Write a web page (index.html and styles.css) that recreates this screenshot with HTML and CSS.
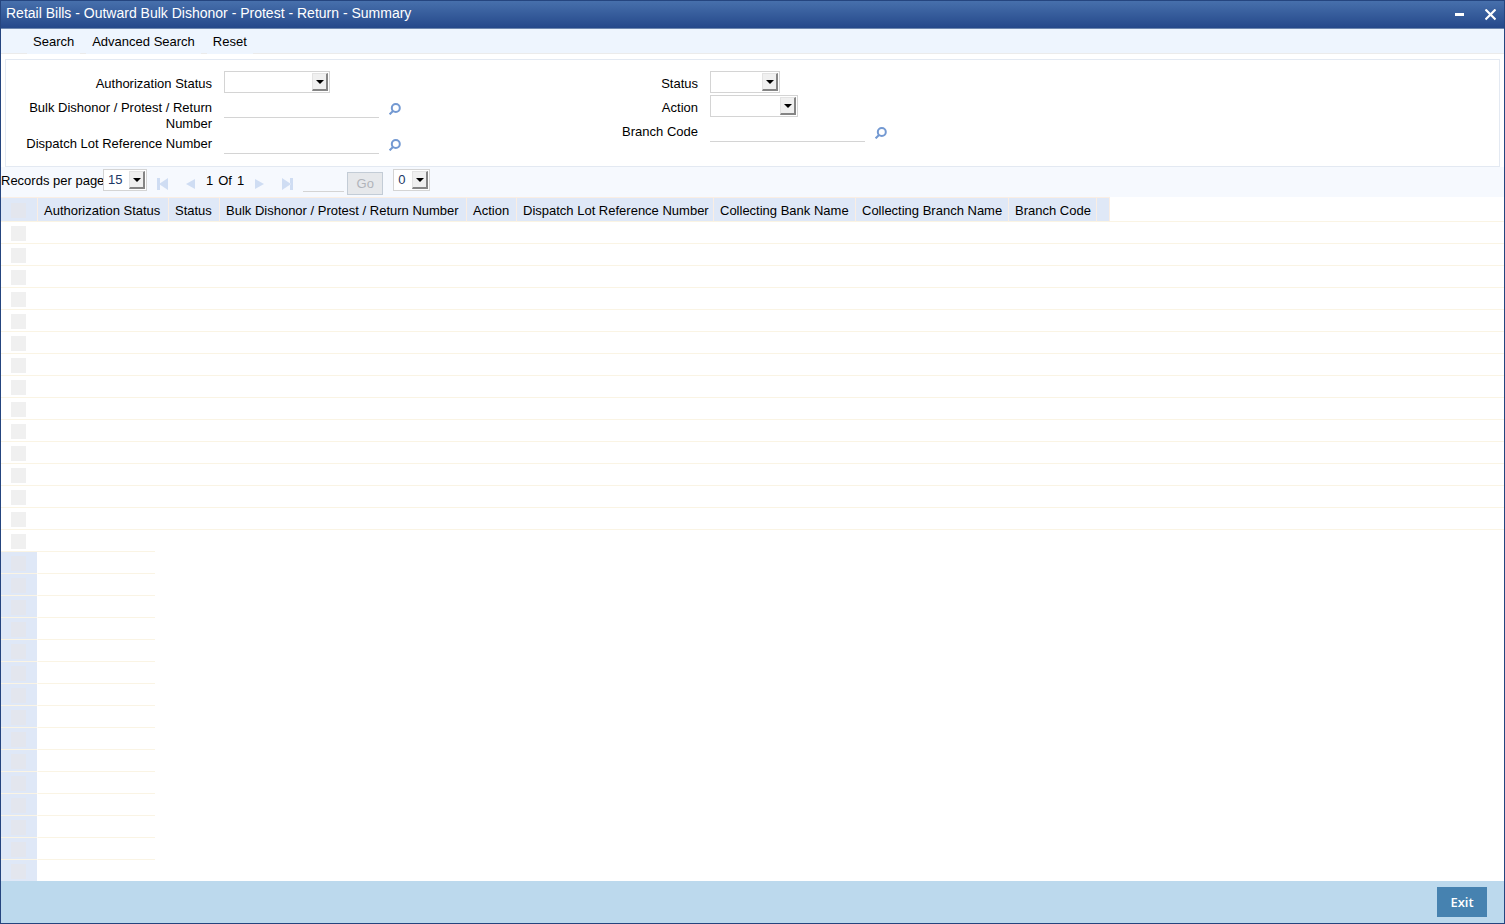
FILE: index.html
```
<!DOCTYPE html>
<html lang="en">
<head>
  <meta charset="UTF-8">
  <meta name="viewport" content="width=device-width, initial-scale=1.0">
  <title>Retail Bills - Outward Bulk Dishonor - Protest - Return - Summary</title>
  <link rel="stylesheet" href="styles.css">
</head>
<body>
  <div class="window">
    <header class="title-bar">
      <h1>Retail Bills - Outward Bulk Dishonor - Protest - Return - Summary</h1>
      <div class="window-buttons">
        <button type="button" aria-label="Minimize">
          <svg width="11" height="12" viewBox="0 0 11 12"><path d="M1 5.5h9" stroke="#fff" stroke-width="3"/></svg>
        </button>
        <button type="button" aria-label="Close">
          <svg width="11" height="12" viewBox="0 0 11 12"><path d="M.5 .5l10 10M10.5 .5l-10 10" stroke="#fff" stroke-width="2.2"/></svg>
        </button>
      </div>
    </header>

    <nav class="toolbar">
      <button type="button">Search</button>
      <button type="button">Advanced Search</button>
      <button type="button">Reset</button>
    </nav>

    <form class="criteria">
      <div class="criteria-column">
        <div class="field">
          <label for="authStatus">Authorization Status</label>
          <span class="select select-large"><select id="authStatus"><option></option></select></span>
        </div>
        <div class="field">
          <label for="bulkNumber">Bulk Dishonor / Protest / Return Number</label>
          <input type="text" id="bulkNumber">
          <button type="button" class="lookup" aria-label="Find number">
            <svg width="12" height="12" viewBox="0 0 12 12"><circle cx="6.8" cy="5" r="4"/><path d="M4 8L.6 11.4"/></svg>
          </button>
        </div>
        <div class="field">
          <label for="lotNumber">Dispatch Lot Reference Number</label>
          <input type="text" id="lotNumber">
          <button type="button" class="lookup" aria-label="Find dispatch lot">
            <svg width="12" height="12" viewBox="0 0 12 12"><circle cx="6.8" cy="5" r="4"/><path d="M4 8L.6 11.4"/></svg>
          </button>
        </div>
      </div>
      <div class="criteria-column">
        <div class="field">
          <label for="status">Status</label>
          <span class="select select-small"><select id="status"><option></option></select></span>
        </div>
        <div class="field">
          <label for="action">Action</label>
          <span class="select select-medium"><select id="action"><option></option></select></span>
        </div>
        <div class="field">
          <label for="branchCode">Branch Code</label>
          <input type="text" id="branchCode">
          <button type="button" class="lookup" aria-label="Find branch">
            <svg width="12" height="12" viewBox="0 0 12 12"><circle cx="6.8" cy="5" r="4"/><path d="M4 8L.6 11.4"/></svg>
          </button>
        </div>
      </div>
    </form>

    <div class="pager">
      <label for="pageSize">Records per page</label>
      <span class="select select-page"><select id="pageSize"><option>15</option></select></span>
      <div class="pager-nav">
        <button type="button" aria-label="First page">
          <svg width="12" height="12" viewBox="0 0 12 12"><path d="M0 0h3v12H0zM11 0v12L2 6z"/></svg>
        </button>
        <button type="button" aria-label="Previous page">
          <svg width="12" height="12" viewBox="0 0 12 12"><path d="M10 1v10L1 6z"/></svg>
        </button>
      </div>
      <span class="page-info"><span>1</span> <span>Of</span> <span>1</span></span>
      <div class="pager-nav">
        <button type="button" aria-label="Next page">
          <svg width="12" height="12" viewBox="0 0 12 12"><path d="M1 1v10l9-5z"/></svg>
        </button>
        <button type="button" aria-label="Last page">
          <svg width="12" height="12" viewBox="0 0 12 12"><path d="M8 0h3v12H8zM0 0v12l9-6z"/></svg>
        </button>
      </div>
      <input type="text" class="page-number" aria-label="Page number">
      <button type="button" class="go" disabled>Go</button>
      <span class="select select-lock"><select aria-label="Locked columns"><option>0</option></select></span>
    </div>

    <main class="results">
      <table class="grid">
        <colgroup>
          <col class="col-check">
          <col class="col-auth">
          <col class="col-status">
          <col class="col-bulk">
          <col class="col-action">
          <col class="col-lot">
          <col class="col-bank">
          <col class="col-branch">
          <col class="col-code">
          <col class="col-end">
          <col>
        </colgroup>
        <thead>
          <tr>
            <th><input type="checkbox" aria-label="Select all" disabled></th>
            <th>Authorization Status</th>
            <th>Status</th>
            <th>Bulk Dishonor / Protest / Return Number</th>
            <th>Action</th>
            <th>Dispatch Lot Reference Number</th>
            <th>Collecting Bank Name</th>
            <th>Collecting Branch Name</th>
            <th>Branch Code</th>
            <th></th>
            <td></td>
          </tr>
        </thead>
        <tbody id="rows"></tbody>
      </table>
      <table class="grid grid-locked">
        <colgroup>
          <col class="col-check">
          <col>
        </colgroup>
        <tbody id="lockedRows"></tbody>
      </table>
    </main>

    <footer class="footer">
      <button type="button">Exit</button>
    </footer>
  </div>

  <script>
    // Fill a table body with empty rows
    function addRows(id, count, cells) {
      const body = document.getElementById(id);
      for (let i = 1; i <= count; i++) {
        const row = body.insertRow();
        row.insertCell().innerHTML = '<input type="checkbox" aria-label="Select row ' + i + '" disabled>';
        row.insertCell().colSpan = cells;
      }
    }

    addRows("rows", 15, 10);
    addRows("lockedRows", 15, 1);
  </script>
</body>
</html>
```
FILE: styles.css
```
*,
*::before,
*::after {
  box-sizing: border-box;
}

body {
  margin: 0;
  font-family: "Liberation Sans", Arial, sans-serif;
  font-size: 13px;
  line-height: 16px;
  color: #000;
  background-color: #fff;
}

button,
input,
select {
  margin: 0;
  padding: 0;
  border: none;
  border-radius: 0;
  background: none;
  font: inherit;
  color: inherit;
}

svg {
  display: block;
}

.window {
  display: flex;
  flex-direction: column;
  height: 100vh;
  border: 1px solid #25457f;
}

/* Title bar */
.title-bar {
  display: flex;
  justify-content: space-between;
  height: 28px;
  flex: none;
  padding: 0 8px 0 5px;
  border-bottom: 1px solid #6d87ae;
  background: linear-gradient(#4770ac, #25488a);
  color: #fff;
}

.title-bar h1 {
  margin: 0;
  font-size: 14px;
  font-weight: normal;
  line-height: 24px;
}

.window-buttons {
  display: flex;
  align-items: center;
  gap: 20px;
}

/* Toolbar */
.toolbar {
  display: flex;
  gap: 6px;
  height: 25px;
  flex: none;
  padding-left: 26px;
  border-bottom: 1px solid #ebebeb;
  background-color: #eef5fe;
}

.toolbar button {
  margin-bottom: -1px;
  padding: 0 6px;
  background-color: #eef5fe;
}

/* Search criteria */
.criteria {
  display: flex;
  flex: none;
  margin: 5px 4px 0;
  padding: 11px 0;
  border: 1px solid #e3e9f2;
}

.criteria-column {
  width: 486px;
}

.field {
  display: flex;
  align-items: flex-start;
  min-height: 24px;
}

.field label {
  width: 206px;
  margin-right: 12px;
  padding: 5px 0 0 12px;
  margin-bottom: -1px;
  text-align: right;
}

.field input {
  width: 155px;
  height: 23px;
  border-bottom: 1px solid #d4d4d4;
}

.lookup {
  margin: 8px 0 0 10px;
}

.lookup svg {
  fill: none;
  stroke: #7399d2;
  stroke-width: 2;
}

/* Drop-downs with a raised arrow button */
.select {
  position: relative;
  display: block;
  height: 22px;
}

.select select {
  width: 100%;
  height: 22px;
  padding-left: 4px;
  border: 1px solid #d4d4d4;
  background-color: #fff;
  color: #1c3765;
  appearance: none;
}

.select::before {
  content: "";
  position: absolute;
  top: 2px;
  right: 2px;
  width: 16px;
  height: 18px;
  border: 1px solid #e3e3e3;
  border-right: 2px solid #858585;
  border-bottom: 2px solid #858585;
  background-color: #f0f0f0;
  pointer-events: none;
}

.select::after {
  content: "";
  position: absolute;
  top: 9px;
  right: 6px;
  border: 4px solid transparent;
  border-top-color: #000;
  border-bottom: none;
  pointer-events: none;
}

.select-large {
  width: 106px;
}

.select-medium {
  width: 88px;
}

.select-small {
  width: 70px;
}

.select-page {
  width: 44px;
}

.select-lock {
  width: 37px;
}

/* Pager */
.pager {
  display: flex;
  align-items: flex-start;
  flex: none;
  height: 30px;
  padding-top: 2px;
  background-color: #f6f9fe;
}

.pager label {
  width: 102px;
  padding-top: 4px;
  white-space: nowrap;
}

.pager-nav {
  display: flex;
  gap: 16px;
  padding: 9px 9px 0 10px;
}

.pager-nav svg {
  fill: #cfddf3;
}

.page-info {
  display: flex;
  gap: 5px;
  padding-top: 4px;
}

.page-number {
  width: 41px;
  height: 23px;
  border-bottom: 1px solid #d4d4d4;
}

.go {
  width: 36px;
  height: 23px;
  margin: 3px 10px 0 3px;
  border: 1px solid #c3ccd6;
  background-color: #e6e8eb;
  color: #b1b4ba;
}

/* Results */
.results {
  flex: 1;
  min-height: 0;
  overflow: hidden;
}

.grid {
  width: 100%;
  border-spacing: 0;
  table-layout: fixed;
}

.grid th,
.grid td {
  height: 22px;
  padding: 2px 0 0;
  border-bottom: 1px solid #faf4e4;
}

.grid thead th,
.grid thead td {
  height: 25px;
}

.grid th {
  padding-left: 6px;
  border-top: 1px solid #faeee4;
  border-right: 1px solid #faeee4;
  background-color: #dfe8f7;
  font-weight: normal;
  text-align: left;
  white-space: nowrap;
}

.grid th:first-child,
.grid td:first-child {
  padding-left: 10px;
}

.grid input {
  display: block;
  width: 15px;
  height: 15px;
  background-color: #f0f0f0;
  appearance: none;
}

.grid th input,
.grid-locked input {
  background-color: #e3e6ee;
}

.grid tbody tr:last-child td {
  border-bottom-color: transparent;
}

.grid-locked {
  width: 154px;
  margin-top: -1px;
  border-top: 1px solid #faf4e4;
}

.grid-locked td:first-child {
  border-right: 1px solid #fff;
  background-color: #dfe8f7;
}

.col-check {
  width: 37px;
}

.col-auth {
  width: 131px;
}

.col-status {
  width: 51px;
}

.col-bulk {
  width: 247px;
}

.col-action {
  width: 50px;
}

.col-lot {
  width: 197px;
}

.col-bank {
  width: 142px;
}

.col-branch {
  width: 153px;
}

.col-code {
  width: 88px;
}

.col-end {
  width: 13px;
}

/* Footer */
.footer {
  display: flex;
  align-items: center;
  justify-content: flex-end;
  flex: none;
  height: 42px;
  padding-right: 17px;
  background-color: #bcd9ed;
}

.footer button {
  width: 50px;
  height: 30px;
  background-color: #4682b0;
  color: #fff;
  font-family: "Open Sans", sans-serif;
  font-weight: 600;
}
```
